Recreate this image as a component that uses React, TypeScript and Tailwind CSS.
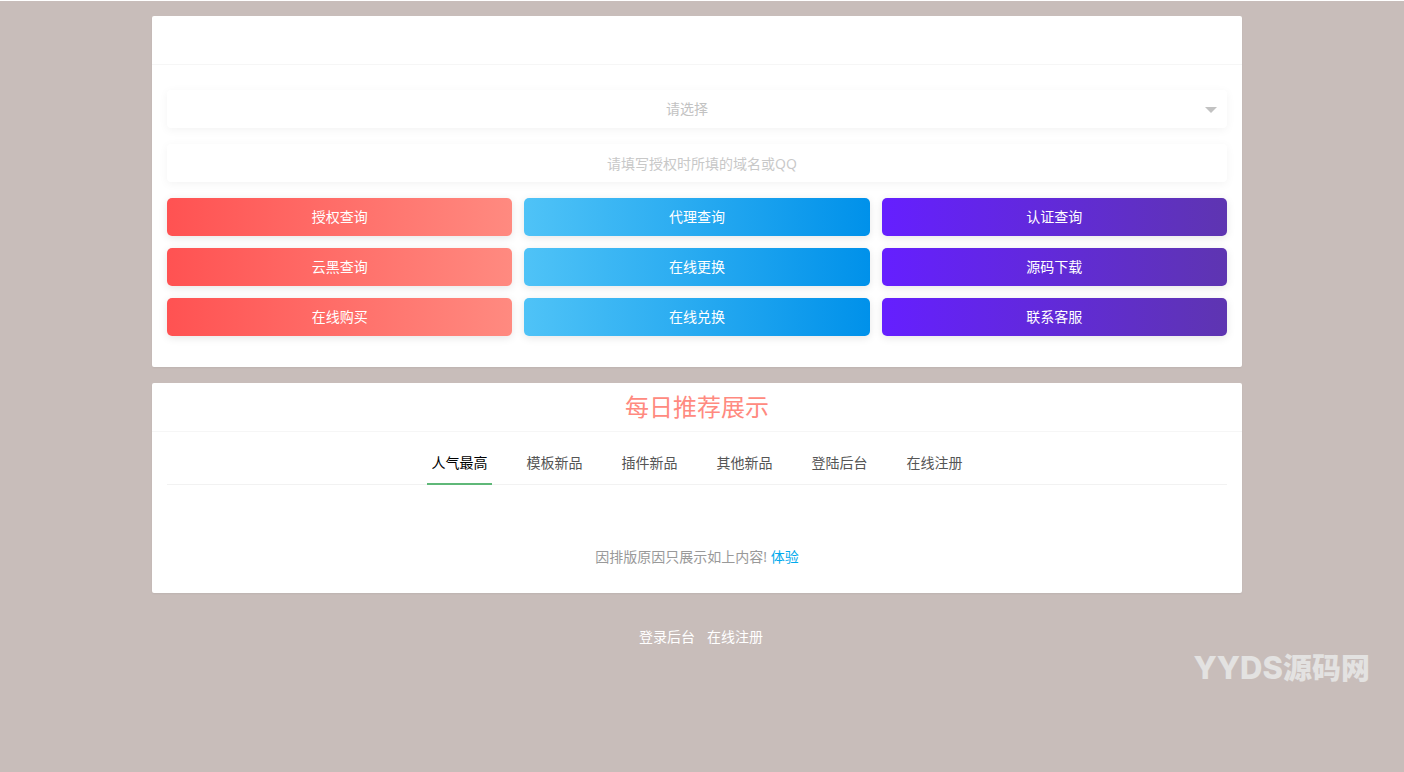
import { useState } from "react";

const actions = [
  { label: "授权查询", tone: "red" },
  { label: "代理查询", tone: "blue" },
  { label: "认证查询", tone: "purple" },
  { label: "云黑查询", tone: "red" },
  { label: "在线更换", tone: "blue" },
  { label: "源码下载", tone: "purple" },
  { label: "在线购买", tone: "red" },
  { label: "在线兑换", tone: "blue" },
  { label: "联系客服", tone: "purple" },
] as const;

const tones = {
  red: "from-[#ff5252] to-[#ff8a80]",
  blue: "from-[#4fc3f7] to-[#0091ea]",
  purple: "from-[#651fff] to-[#5e35b1]",
};

const tabs = ["人气最高", "模板新品", "插件新品", "其他新品", "登陆后台", "在线注册"];

const field =
  "h-[38px] w-full appearance-none rounded-sm bg-white text-center text-sm shadow-[0_2px_10px_rgba(0,0,0,0.05)] outline-none";

export default function App() {
  const [active, setActive] = useState(0);

  return (
    <div className="relative min-h-screen border-t border-white bg-[#c8bdba] pr-[10px] pt-[15px] font-['Open_Sans','Noto_Sans_CJK_SC',sans-serif] text-sm">
      <main className="mx-auto flex max-w-[1090px] flex-col gap-4">
        <section className="rounded-xs bg-white shadow-[0_1px_2px_rgba(0,0,0,0.05)]">
          <header className="h-[49px] border-b border-[#f6f6f6]" />
          <form className="px-[15px] pb-[31px] pt-[25px]" onSubmit={(e) => e.preventDefault()}>
            <div className="relative">
              <select
                aria-label="请选择"
                defaultValue=""
                className={`${field} pl-[10px] pr-[30px] text-[#c2c2c2] [text-align-last:center]`}
              >
                <option value="">请选择</option>
              </select>
              <svg
                className="pointer-events-none absolute right-[10px] top-[17px]"
                width="12"
                height="6"
                viewBox="0 0 12 6"
                fill="#c2c2c2"
                aria-hidden="true"
              >
                <path d="M0 0h12L6 6z" />
              </svg>
            </div>
            <input
              type="text"
              aria-label="域名或QQ"
              placeholder="请填写授权时所填的域名或QQ"
              className={`${field} mt-4 pl-[10px] placeholder:text-[#c8c8c8]`}
            />
            <div className="mt-4 grid grid-cols-3 gap-3">
              {actions.map((a) => (
                <button
                  key={a.label}
                  type="button"
                  className={`h-[38px] rounded-[5px] bg-linear-to-r/srgb text-white shadow-[0_2px_8px_rgba(0,0,0,0.1)] ${tones[a.tone]}`}
                >
                  {a.label}
                </button>
              ))}
            </div>
          </form>
        </section>

        <section className="rounded-xs bg-white shadow-[0_1px_2px_rgba(0,0,0,0.05)]">
          <h2 className="h-[49px] border-b border-[#f6f6f6] text-center text-2xl leading-[48px] text-[#ff8a80]">
            每日推荐展示
          </h2>
          <div className="px-[15px] pb-[26px] pt-[10px]">
            <div role="tablist" className="flex justify-center gap-[30px] border-b border-[#f2f2f2]">
              {tabs.map((tab, i) => (
                <button
                  key={tab}
                  type="button"
                  role="tab"
                  aria-selected={i === active}
                  onClick={() => setActive(i)}
                  className={`-mb-px h-[43px] w-[65px] border-b-2 ${
                    i === active ? "border-[#5fb878] text-black" : "border-transparent text-[#555]"
                  }`}
                >
                  {tab}
                </button>
              ))}
            </div>
            <p className="pt-[61px] text-center leading-[21px] text-[#999]">
              因排版原因只展示如上内容!{" "}
              <a href="#" className="text-[#01aaed]">
                体验
              </a>
            </p>
          </div>
        </section>
      </main>

      <footer className="flex justify-center gap-3 pl-[8px] pt-[34px] leading-5 text-white">
        <a href="#">登录后台</a>
        <a href="#">在线注册</a>
      </footer>

      <div className="pointer-events-none absolute right-[34px] top-[643px] font-['Noto_Sans_CJK_SC',sans-serif] text-[29px] font-black leading-[44px] text-[#e3e2e1]">
        <span className="font-['Inter','Noto_Sans_CJK_SC',sans-serif] text-[31px] font-extrabold">YYDS</span>
        源码网
      </div>
    </div>
  );
}
